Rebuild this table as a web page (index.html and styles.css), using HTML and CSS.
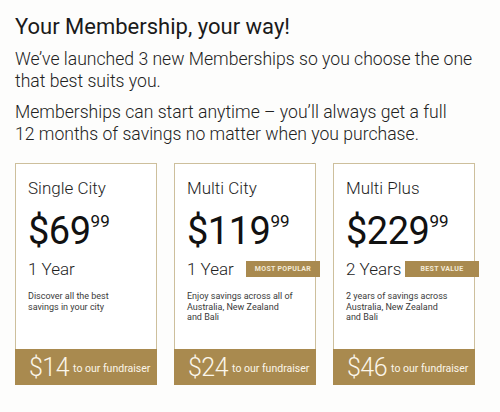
FILE: index.html
```html
<!DOCTYPE html>
<html>
<head>
<meta charset="utf-8">
<link rel="stylesheet" href="styles.css">
</head>
<body>
<div class="page">
  <h1 class="title">Your Membership, your way!</h1>
  <p class="lead">We’ve launched 3 new Memberships so you choose the one<br>that best suits you.</p>
  <p class="lead lead-2">Memberships can start anytime – you’ll always get a full<br>12 months of savings no matter when you purchase.</p>
  <div class="cards">
    <div class="card">
      <div class="card-body">
        <div class="plan">Single City</div>
        <div class="price">$69<sup class="cents">99</sup></div>
        <div class="term">1 Year</div>
        <div class="desc">Discover all the best savings in your city</div>
      </div>
      <div class="fund"><span class="fund-amt">$14</span><span class="fund-txt">to our fundraiser</span></div>
    </div>
    <div class="card">
      <div class="card-body">
        <div class="plan">Multi City</div>
        <div class="price">$119<sup class="cents">99</sup></div>
        <div class="term">1 Year</div>
        <div class="desc">Enjoy savings across all of Australia, New Zealand and Bali</div>
      </div>
      <div class="badge">MOST POPULAR</div>
      <div class="fund"><span class="fund-amt">$24</span><span class="fund-txt">to our fundraiser</span></div>
    </div>
    <div class="card">
      <div class="card-body">
        <div class="plan">Multi Plus</div>
        <div class="price">$229<sup class="cents">99</sup></div>
        <div class="term">2 Years</div>
        <div class="desc">2 years of savings across Australia, New Zealand and Bali</div>
      </div>
      <div class="badge">BEST VALUE</div>
      <div class="fund"><span class="fund-amt">$46</span><span class="fund-txt">to our fundraiser</span></div>
    </div>
  </div>
</div>
</body>
</html>
```

FILE: styles.css
```css
html, body {
  margin: 0;
  padding: 0;
  background: #fdfdfc;
}
body {
  font-family: Roboto, "Liberation Sans", sans-serif;
  color: #1e1e1e;
  width: 500px;
  height: 412px;
  overflow: hidden;
}
.page {
  padding: 14px 15px 0 15px;
}
.title {
  margin: 0;
  font-size: 22px;
  font-weight: 400;
  line-height: 26px;
  color: #1a1a1a;
}
.lead {
  margin: 8px 0 0 0;
  font-size: 17.6px;
  font-weight: 300;
  line-height: 22px;
  width: 475px;
  white-space: nowrap;
  color: #222;
}
.lead-2 {
  margin-top: 9px;
}
.cards {
  display: flex;
  gap: 17px;
  margin-top: 18px;
}
.card {
  position: relative;
  width: 142px;
  height: 222px;
  box-sizing: border-box;
  border: 1px solid #cdbf9c;
  background: #fff;
  display: flex;
  flex-direction: column;
}
.card-body {
  flex: 1;
  padding: 13px 10px 0 12px;
}
.plan {
  font-size: 17px;
  font-weight: 300;
  line-height: 22px;
  color: #1e1e1e;
}
.price {
  margin-top: 12px;
  font-size: 38px;
  font-weight: 400;
  line-height: 40px;
  letter-spacing: -0.5px;
  color: #111;
}
.cents {
  font-size: 17px;
  vertical-align: top;
  position: relative;
  top: 2px;
  letter-spacing: 0;
  line-height: 17px;
}
.term {
  margin-top: 7px;
  font-size: 17px;
  font-weight: 300;
  line-height: 22px;
}
.desc {
  margin-top: 11px;
  font-size: 9px;
  line-height: 10.5px;
  color: #3a3a3a;
  padding-right: 10px;
}
.badge {
  position: absolute;
  right: -5px;
  top: 97px;
  width: 74px;
  height: 16px;
  background: #a98a4f;
  color: #f3ead8;
  font-size: 7px;
  font-weight: 700;
  letter-spacing: 0.3px;
  display: flex;
  align-items: center;
  justify-content: center;
}
.fund {
  height: 36px;
  margin: 0 -1px -1px -1px;
  background: #a98a4f;
  color: #fbf6ea;
  display: flex;
  align-items: center;
  padding-left: 14px;
  gap: 4px;
  white-space: nowrap;
}
.fund-amt {
  font-size: 25px;
  font-weight: 300;
  letter-spacing: -0.5px;
}
.fund-txt {
  font-size: 10.5px;
  font-weight: 400;
  padding-top: 3px;
}
```
